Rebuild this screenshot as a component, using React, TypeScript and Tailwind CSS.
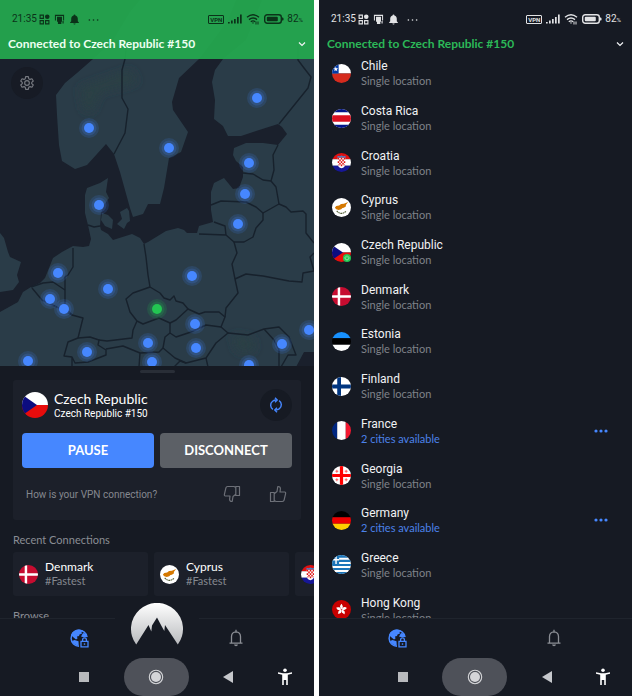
import { useId } from 'react';
import type { ReactNode } from 'react';
import clsx from 'clsx';

type Country = {
  name: string;
  flag: string;
  cities?: number;
  connected?: boolean;
};

const countries: Country[] = [
  { name: 'Chile', flag: 'cl' },
  { name: 'Costa Rica', flag: 'cr' },
  { name: 'Croatia', flag: 'hr' },
  { name: 'Cyprus', flag: 'cy' },
  { name: 'Czech Republic', flag: 'cz', connected: true },
  { name: 'Denmark', flag: 'dk' },
  { name: 'Estonia', flag: 'ee' },
  { name: 'Finland', flag: 'fi' },
  { name: 'France', flag: 'fr', cities: 2 },
  { name: 'Georgia', flag: 'ge' },
  { name: 'Germany', flag: 'de', cities: 2 },
  { name: 'Greece', flag: 'gr' },
  { name: 'Hong Kong', flag: 'hk' },
];

const recents = [
  { name: 'Denmark', flag: 'dk' },
  { name: 'Cyprus', flag: 'cy' },
  { name: 'Croatia', flag: 'hr' },
];

const flagArt: Record<string, ReactNode> = {
  cl: (
    <>
      <path fill="#fff" d="M0 0h20v10H0z" />
      <path fill="#d52b1e" d="M0 10h20v10H0z" />
      <path fill="#0039a6" d="M0 0h7v10H0z" />
      <path fill="#fff" d="m4 3 .7 1.6 1.8.1-1.4 1.1.5 1.7L4 6.6l-1.6.9.5-1.7-1.4-1.1 1.8-.1z" />
    </>
  ),
  cr: (
    <>
      <path fill="#fff" d="M0 0h20v20H0z" />
      <path fill="#001489" d="M0 0h20v3.5H0zM0 16.5h20V20H0z" />
      <path fill="#da1020" d="M0 6.5h20v7H0z" />
    </>
  ),
  hr: (
    <>
      <path fill="#e01010" d="M0 0h20v6.7H0z" />
      <path fill="#fff" d="M0 6.7h20v6.6H0z" />
      <path fill="#171796" d="M0 13.3h20V20H0z" />
      <path fill="#fff" d="M6 5h8v7q-.5 3-4 4-3.500-1-4-4z" />
      <path
        fill="#e01010"
        d="M6 5h1.6v1.8H6zM9.2 5h1.6v1.8H9.2zM12.4 5H14v1.8h-1.6zM7.6 6.8h1.6v1.8H7.6zM10.8 6.8h1.6v1.8h-1.6zM6 8.6h1.6v1.8H6zM9.2 8.6h1.6v1.8H9.2zM12.4 8.6H14v1.8h-1.6zM7.6 10.4h1.6v1.8H7.6zM10.8 10.4h1.6v1.8h-1.6zM6.3 12.2h1.3V14zM9.2 12.2h1.6V14H9.2zM12.4 12.2h1.3L12.4 14z"
      />
      <path fill="#4a7fc4" d="m5.500 4.800.5-2 2 .6 2-.9 2 .9 2-.6.5 2z" />
    </>
  ),
  cy: (
    <>
      <path fill="#fff" d="M0 0h20v20H0z" />
      <path
        fill="#d57800"
        d="M3 10.200 4.500 8.500l3-.5 2-1.600 3-.4L17 4.200l-2.500 3.200.3 1.300-2.300 1.500-1.500.2-1.300 1.400-2.700.8-2.500-.8z"
      />
      <path fill="none" stroke="#4e5b31" strokeWidth="1.1" strokeDasharray="1.8 .5" d="M5 13.500q2 2.500 5 2.700 3-.2 5-2.700" />
    </>
  ),
  cz: (
    <>
      <path fill="#fff" d="M0 0h20v10H0z" />
      <path fill="#e80c0c" d="M0 10h20v10H0z" />
      <path fill="#0c0c80" d="M0 2v16l11.500-8z" />
    </>
  ),
  dk: (
    <>
      <path fill="#c60c30" d="M0 0h20v20H0z" />
      <path fill="#fff" d="M6 0h2.600v20H6zM0 8.700h20v2.600H0z" />
    </>
  ),
  ee: (
    <>
      <path fill="#1791ff" d="M0 0h20v6.7H0z" />
      <path fill="#000" d="M0 6.700h20v6.600H0z" />
      <path fill="#fff" d="M0 13.300h20V20H0z" />
    </>
  ),
  fi: (
    <>
      <path fill="#fff" d="M0 0h20v20H0z" />
      <path fill="#003580" d="M5.500 0h4v20h-4zM0 8h20v4H0z" />
    </>
  ),
  fr: (
    <>
      <path fill="#00267f" d="M0 0h5.500v20H0z" />
      <path fill="#fff" d="M5.500 0h9v20h-9z" />
      <path fill="#f31830" d="M14.500 0H20v20h-5.500z" />
    </>
  ),
  ge: (
    <>
      <path fill="#fff" d="M0 0h20v20H0z" />
      <path fill="#ff0000" d="M8.300 0h3.400v20H8.300zM0 8.300h20v3.400H0z" />
      <path
        fill="#ff5a5a"
        d="M4.600 4h1v3h-1zM3.600 5h3v1h-3zM14.400 4h1v3h-1zM13.400 5h3v1h-3zM4.600 13h1v3h-1zM3.600 14h3v1h-3zM14.400 13h1v3h-1zM13.400 14h3v1h-3z"
      />
    </>
  ),
  de: (
    <>
      <path fill="#000" d="M0 0h20v6.7H0z" />
      <path fill="#ee0000" d="M0 6.700h20v6.600H0z" />
      <path fill="#ffce00" d="M0 13.300h20V20H0z" />
    </>
  ),
  gr: (
    <>
      <path fill="#fff" d="M0 0h20v20H0z" />
      <path fill="#1c75b9" d="M0 0h20v2.800H0zM0 5h20v2.300H0zM0 9.500h20v2.200H0zM0 13.700h20v2.200H0zM0 17.800h20V20H0z" />
      <path fill="#1c75b9" d="M0 0h7.500v9.500H0z" />
      <path fill="#fff" d="M0 4.300h7.500v1.500H0zM3.500 0H5v9.500H3.500z" />
    </>
  ),
  hk: (
    <>
      <path fill="#c80000" d="M0 0h20v20H0z" />
      {[0, 72, 144, 216, 288].map((angle) => (
        <path
          key={angle}
          fill="#fff"
          transform={`rotate(${angle} 10 10)`}
          d="M10 9.700C8 8 7.800 5.500 10.600 4c-.8 1.400 2.800 2.700-.6 5.700z"
        />
      ))}
    </>
  ),
};

function Flag({ code, className }: { code: string; className?: string }) {
  return (
    <svg viewBox="0 0 20 20" className={clsx('shrink-0 overflow-hidden rounded-full', className)} aria-hidden="true">
      {flagArt[code]}
    </svg>
  );
}

function StatusBar({ className }: { className?: string }) {
  return (
    <div className={clsx('flex h-[37px] items-center justify-between pt-px pr-[11px] pl-3 font-[Roboto,sans-serif]', className)}>
      <div className="flex items-center gap-[2px]">
        <span className="text-[10px] leading-4">21:35</span>
        <svg viewBox="0 0 12 12" className="size-[11px]" fill="none" stroke="currentColor" strokeWidth="1.2">
          <path d="M1.200 1.200h3.600v3.600H1.200zM1.200 7.200h3.600v3.600H1.200zM7.200 7.200h3.600v3.600H7.200z" />
          <circle cx="9" cy="3" r="2.500" fill="currentColor" stroke="none" />
        </svg>
        <svg viewBox="0 0 12 12" className="ml-[2px] size-[11px]" fill="currentColor">
          <path d="M1 .8h10V7H9.900V2.200H2.100V7H1z" />
          <path d="M3.300 3h5.400v5.500H8V11H4.300V8.500h-1z" />
          <path d="M9.300 7.500h1.200v2.800H9.300z" />
        </svg>
        <svg viewBox="0 0 12 12" className="ml-[2px] size-[11px]" fill="currentColor">
          <path d="M6 .6a1 1 0 0 1 1 1c1.800.5 2.600 1.900 2.600 3.500V8l1.200 1.200v.6H1.200v-.6L2.400 8V5.100C2.400 3.500 3.200 2.100 5 1.600a1 1 0 0 1 1-1zM4.800 10.300h2.400a1.200 1.200 0 0 1-2.400 0z" />
        </svg>
        <svg viewBox="0 0 12 12" className="ml-[6px] size-[11px]" fill="currentColor">
          <circle cx="1.500" cy="6.500" r=".9" />
          <circle cx="6" cy="6.500" r=".9" />
          <circle cx="10.500" cy="6.500" r=".9" />
        </svg>
      </div>
      <div className="flex items-center gap-1">
        <span className="rounded-[1px] border border-current px-px text-[6px] leading-[7px] font-bold">VPN</span>
        <svg viewBox="0 0 14 10" className="h-[10px] w-[14px]" fill="currentColor">
          <path d="M0 8h1.700v1.500H0zM3 6.500h1.700v3H3zM6 5h1.700v4.500H6zM9 3h1.700v6.500H9zM12 .5h1.700v9H12z" />
        </svg>
        <svg viewBox="0 0 14 12" className="h-3 w-[14px]" fill="none" stroke="currentColor" strokeWidth="1.4">
          <path d="M1 4.300q6-5 12 0M3 6.600q4-3.200 8 0M4.800 8.700q2.200-1.700 4.400 0" />
          <path fill="currentColor" stroke="none" d="M6 9.500h2L7 11zM9.500 8.500h1v3h-1zM11.500 8.500h1v3h-1z" />
        </svg>
        <svg viewBox="0 0 20 10" className="h-[10px] w-5" fill="currentColor">
          <rect x=".7" y=".7" width="16.600" height="8.600" rx="2.500" fill="none" stroke="currentColor" strokeWidth="1.4" />
          <rect x="2.800" y="2.700" width="11" height="4.600" rx="1" />
          <path d="M18 3.500h.8q.8 0 .8 1.500t-.8 1.500H18z" />
        </svg>
        <span className="-ml-px text-[10px] leading-4">
          82<span className="text-[6px]">%</span>
        </span>
      </div>
    </div>
  );
}

function ConnectionTitle({ className }: { className?: string }) {
  return (
    <button type="button" className={clsx('flex h-[14px] w-full items-center justify-between px-2', className)}>
      <span className="text-[12px] leading-[14px] font-bold">Connected to Czech Republic #150</span>
      <svg viewBox="0 0 8 8" className="size-2 text-gray-100" fill="none" stroke="currentColor" strokeWidth="1.2">
        <path d="m1 2.500 3 3 3-3" />
      </svg>
    </button>
  );
}

const land = [
  // Scandinavia
  'M140 0 130 12 112 42 93 59 77 73 65 83 56 95 57 115 59 145 62 161 75 169 87 165 106 144 114 154 120 172 130 208 133 217 143 214 148 204 160 204 164 188 169 158 181 152 188 132 173 110 172 102 179 78 199 59 212 42 228 20 236 0z',
  // Finland, the Baltics and the continent
  'M314 0H262L246 40 223 59 215 70 212 82 215 100 214 119 223 126 228 136 241 136 256 131 278 124 282 127 287 134 278 145 263 143 246 143 234 148 233 155 236 161 243 167 243 177 239 188 233 189 224 178 214 183 211 192 211 210 213 222 199 226 197 233 187 233 184 230 178 228 166 231 148 242 144 244 140 238 132 234 113 240 108 234 101 230 100 226 101 213 104 205 109 198 106 192 108 178 100 183 87 188 85 195 85 213 88 225 91 239 89 246 83 247 73 246 62 252 53 258 45 278 40 283 31 287 23 292 18 302 0 312V367H296L304 352H314z',
  // Great Britain
  'M0 233 4 238 8 252 10 257 21 262 17 275 19 282 13 290 0 292z',
  // Danish islands
  'M102 213 108 215 113 220 112 229 105 226 101 220z',
  'M120 212 127 208 129 211 130 221 127 223 124 229 117 224 122 219z',
];

const borders = [
  'M127 40 125 59 122 70V98L128 109 125 133 114 154',
  'M298 40V60L304 68 311 77 308 88 279 124',
  'M278 145 273 155 274 170 271 181 276 187 279 204 286 207 291 212 303 211 306 214V233L314 243',
  'M243 173 253 174 263 180 271 181',
  'M211 205 221 201 246 202 256 207 263 213 279 204',
  'M263 213V220L256 228 253 237 244 242 234 242 226 235 225 226 214 222M226 235 199 234',
  'M234 242 237 253 232 264 235 279 238 293 226 308 225 317',
  'M235 279 246 274 263 276 289 281 302 282 303 273 314 271 310 257 314 253',
  'M144 244 146 257 148 275 150 287 133 293 126 299 130 312 137 321 143 324 159 318 170 323 176 320 188 309 183 303 176 301 174 296 170 300 164 298 160 293 150 287',
  'M188 309 199 314 205 312 219 312 225 317 221 327 206 325 191 332 176 337 170 333V323',
  'M170 333 165 337 163 348 175 358 186 363 206 358 216 343 228 333 221 327',
  'M163 348 159 352 140 353 123 346 106 349M140 353 139 367M186 363 180 361 174 367M206 358 208 367',
  'M228 333 248 335 264 329 279 327 289 337 296 355 288 355 281 367M264 329 274 340 279 350V367',
  'M73 248 73 267 68 275 65 277V307L72 315 83 318 78 338',
  'M31 287 43 283 53 282 65 290M32 288 42 300 57 307 72 315',
  'M78 338 68 342 64 356 72 357 75 363 88 362 106 355V350L98 345 99 340 90 337 78 338M72 357V367',
  'M99 340 107 341 132 338 133 330 137 321',
  'M88 225 94 227 100 226',
];

const servers = [
  [89, 128], [257, 98], [169, 148], [249, 163], [245, 194], [99, 205], [238, 224],
  [58, 273], [50, 299], [64, 309], [108, 289], [192, 276], [195, 324], [196, 348],
  [148, 343], [152, 362], [87, 352], [28, 361], [249, 365], [282, 344], [309, 330],
];

function ServerMap() {
  const blur = useId();
  return (
    <svg
      viewBox="0 0 314 366"
      preserveAspectRatio="xMidYMid slice"
      className="absolute inset-0 size-full"
      role="img"
      aria-label="Server map"
    >
      <defs>
        <filter id={blur} x="-50%" y="-50%" width="200%" height="200%">
          <feGaussianBlur stdDeviation="5" />
        </filter>
      </defs>
      <rect width="314" height="366" fill="#1a202c" />
      {land.map((d) => (
        <path key={d} d={d} fill="#2a3c48" />
      ))}
      <g fill="#2b4045" filter={`url(#${blur})`}>
        <path d="M80 88 130 70 138 82 100 92 92 112 84 110z" />
        <path d="M232 335 252 338 255 350 238 352z" />
      </g>
      <g fill="none" stroke="#17212c" strokeWidth="1.4" strokeLinejoin="round">
        {borders.map((d) => (
          <path key={d} d={d} />
        ))}
      </g>
      {servers.map(([x, y]) => (
        <g key={`${x}-${y}`} fill="#4687ff">
          <circle cx={x} cy={y} r="10" opacity=".15" />
          <circle cx={x} cy={y} r="7.500" opacity=".18" />
          <circle cx={x} cy={y} r="5" />
        </g>
      ))}
      <g fill="#23c552">
        <circle cx="157" cy="309" r="10" opacity=".15" />
        <circle cx="157" cy="309" r="7.500" opacity=".18" />
        <circle cx="157" cy="309" r="5" />
      </g>
    </svg>
  );
}

function GearIcon() {
  return (
    <svg viewBox="0 0 24 24" className="size-4" fill="none" stroke="currentColor" strokeWidth="1.7" strokeLinejoin="round">
      <path d="M10 2.500h4l.6 3 1.900 1.100 2.900-1 2 3.400-2.300 2v2l2.300 2-2 3.400-2.900-1-1.900 1.100-.6 3h-4l-.6-3-1.900-1.100-2.900 1-2-3.400 2.300-2v-2l-2.300-2 2-3.400 2.900 1 1.900-1.100z" />
      <circle cx="12" cy="12" r="3.500" />
    </svg>
  );
}

function ThumbIcon({ down }: { down?: boolean }) {
  return (
    <svg
      viewBox="0 0 18 18"
      className={clsx('size-[18px] text-[#6d7078]', down && 'rotate-180')}
      fill="none"
      stroke="currentColor"
      strokeWidth="1.2"
      strokeLinejoin="round"
    >
      <path d="M1.500 7.500h3.700v9H1.500zM5.200 8.700 8 6.500 8.800 1.500q2.600-.2 2.600 2.300L11 7h4.600q1.300.2 1 1.600l-1.500 6.600q-.3 1.300-1.700 1.300H7l-1.800-1" />
    </svg>
  );
}

function GlobeLockIcon() {
  return (
    <svg viewBox="0 0 20 20" className="size-5" fill="none">
      <path stroke="#4687ff" strokeWidth="1.5" d="M18 9A8 8 0 1 0 10 18.200" />
      <path
        fill="#4687ff"
        d="M2 7Q4 1.500 10 1.500L14 2.200 12.500 4 13 5.500 10.500 6.500 10 8 8 8.500 8.500 10.500 7 11.500 4 9zM14 5l3.500 1 .8 3.200H14.500L12 8.500zM5.500 12l4 1.200L9.800 18q-5-1-6.800-5z"
      />
      <path fill="#161a23" d="M10.500 9.500H20V20h-9.500z" />
      <path stroke="#4687ff" strokeWidth="1.3" d="M12 13.300h7v5.500h-7zM13.600 13v-1.200a1.900 1.900 0 0 1 3.800 0V13" />
      <path fill="#4687ff" d="M14.800 15.300h1.400v1.500h-1.400z" />
    </svg>
  );
}

function BellIcon() {
  return (
    <svg viewBox="0 0 16 18" className="h-[18px] w-4 text-[#8b8e95]" fill="none" stroke="currentColor" strokeWidth="1.3">
      <path d="M3.500 14V7.500Q3.700 3 8 2.800q4.300.2 4.500 4.700V14M1.500 14.200h13M8 .8v2" />
      <path fill="currentColor" stroke="none" d="M6 15.500h4q-.3 1.800-2 1.800t-2-1.800z" />
    </svg>
  );
}

function NordLogo() {
  const shade = useId();
  return (
    <svg viewBox="0 -1 52 42" className="h-[42px] w-[52px]" aria-hidden="true">
      <defs>
        <linearGradient id={shade} x1="0" y1="0" x2="0" y2="1">
          <stop offset="0" stopColor="#ffffff" />
          <stop offset="1" stopColor="#b9bbbe" />
        </linearGradient>
      </defs>
      <path
        fill={`url(#${shade})`}
        d="M5.200 40.500A26 26 0 1 1 46.800 40.500L34 21 33.300 27 30.500 22 26 13.500 21 21.500 20.300 27.500 17.500 21z"
      />
    </svg>
  );
}

function AppTabs({ logo }: { logo?: boolean }) {
  return (
    <nav className="relative z-10 grid h-[39px] shrink-0 grid-cols-2 border-t border-[#1f242d] bg-[#161a23]">
      <button type="button" aria-label="Servers" className="flex items-center justify-center">
        <GlobeLockIcon />
      </button>
      <button type="button" aria-label="Notifications" className="flex items-center justify-center">
        <BellIcon />
      </button>
      {logo && (
        <button
          type="button"
          aria-label="Connect"
          className="absolute bottom-3 left-1/2 -translate-x-1/2 bg-[#161a23] px-4"
        >
          <NordLogo />
        </button>
      )}
    </nav>
  );
}

function SystemBar() {
  return (
    <nav className="flex h-[39px] shrink-0 items-end bg-[#161a23] pr-3 pl-11">
      <button type="button" aria-label="Recent apps" className="flex h-[38px] flex-1 items-center justify-center">
        <span className="size-[10px] bg-[#b8babd]" />
      </button>
      <button
        type="button"
        aria-label="Home"
        className="flex h-[38px] w-[65px] items-center justify-center rounded-full bg-[#4e5159]"
      >
        <svg viewBox="0 0 16 16" className="size-4">
          <circle cx="8" cy="8" r="6.700" fill="none" stroke="#d4d5d8" strokeWidth="1.1" />
          <circle cx="8" cy="8" r="5" fill="#d4d5d8" />
        </svg>
      </button>
      <button type="button" aria-label="Back" className="flex h-[38px] flex-1 items-center justify-center">
        <svg viewBox="0 0 10 12" className="h-3 w-[10px]">
          <path fill="#c6c8cc" d="M10 0v12L0 6z" />
        </svg>
      </button>
      <button type="button" aria-label="Accessibility" className="flex h-[38px] w-[34px] items-center justify-center">
        <svg viewBox="0 0 16 18" className="h-[18px] w-4" fill="#fff">
          <circle cx="8" cy="2.200" r="1.800" />
          <path d="M1 4.300 6 5.200h4l5-.9v1.500l-4.200.9V17H9.200v-5H6.800v5H5.200V6.700L1 5.800z" />
        </svg>
      </button>
    </nav>
  );
}

function HomeScreen() {
  return (
    <section className="flex min-w-0 flex-col overflow-hidden bg-[#161a23]">
      <div className="relative h-[366px] shrink-0 overflow-hidden">
        <ServerMap />
        <header className="relative bg-[#24aa4f]/92 pb-2">
          <StatusBar className="text-[#0b3219]" />
          <ConnectionTitle className="text-[#edfff2]" />
        </header>
        <button
          type="button"
          aria-label="Settings"
          className="relative mt-2 ml-[11px] flex size-8 items-center justify-center rounded-full bg-[#171b25] text-[#777a81]"
        >
          <GearIcon />
        </button>
      </div>

      <div className="relative flex min-h-0 flex-1 flex-col overflow-hidden px-[13px]">
        <span className="mx-auto mt-1 h-[3px] w-[35px] shrink-0 rounded-full bg-[#292e37]" />
        <div className="mt-[7px] h-[140px] shrink-0 rounded-[3px] bg-[#1c202a] px-[9px] pt-[9px]">
          <div className="flex h-8 items-center">
            <Flag code="cz" className="size-[26px]" />
            <div className="ml-[6px] flex-1 pt-[2px] text-white">
              <h1 className="text-[14px] leading-4">Czech Republic</h1>
              <p className="font-[Roboto,sans-serif] text-[10px] leading-[14px]">Czech Republic #150</p>
            </div>
            <button
              type="button"
              aria-label="Reconnect"
              className="flex size-8 items-center justify-center rounded-full bg-[#161a23]"
            >
              <svg viewBox="0 0 16 16" className="size-4" fill="none" stroke="#4687ff" strokeWidth="1.4">
                <path d="M4.900 12.400A5 5 0 0 1 4.600 4.300Q6 3 8.500 3M11.100 3.600a5 5 0 0 1 .3 8.100Q10 13 7.500 13" />
                <path d="M7 .8 9.200 3 7 5.200M9 10.800 6.800 13 9 15.200" />
              </svg>
            </button>
          </div>
          <div className="mt-3 grid grid-cols-2 gap-[6px] text-[13px] font-bold text-white">
            <button type="button" className="h-[35px] rounded-[4px] bg-[#4687ff]">
              PAUSE
            </button>
            <button type="button" className="h-[35px] rounded-[4px] bg-[#5c6066]">
              DISCONNECT
            </button>
          </div>
          <div className="mt-[17px] flex h-[18px] items-center pr-[5px] pl-1 text-[#85888f]">
            <p className="flex-1 font-[Roboto,sans-serif] text-[10px]">How is your VPN connection?</p>
            <button type="button" aria-label="Bad connection">
              <ThumbIcon down />
            </button>
            <button type="button" aria-label="Good connection" className="ml-7">
              <ThumbIcon />
            </button>
          </div>
        </div>

        <h2 className="mt-3 text-[11px] leading-4 text-[#8a8d94]">Recent Connections</h2>
        <div className="mt-1 flex gap-[6px]">
          {recents.map((recent) => (
            <button
              key={recent.name}
              type="button"
              className="flex h-11 w-[135px] shrink-0 items-center gap-[7px] rounded-[3px] bg-[#1c202a] pl-[6px] text-left"
            >
              <Flag code={recent.flag} className="size-[19px]" />
              <span>
                <span className="block text-[12px] leading-[14px] text-white">{recent.name}</span>
                <span className="block text-[11px] leading-[14px] text-[#85888f]">#Fastest</span>
              </span>
            </button>
          ))}
        </div>
        <h2 className="mt-3 text-[11px] leading-4 text-[#8a8d94]">Browse</h2>
      </div>

      <AppTabs logo />
      <SystemBar />
    </section>
  );
}

function CountryRow({ country }: { country: Country }) {
  return (
    <li className="flex items-center pr-6 pl-[13px]">
      <span className="relative shrink-0">
        <Flag code={country.flag} className="size-[19px]" />
        {country.connected && (
          <svg viewBox="0 0 8 8" className="absolute right-0 bottom-0 size-2">
            <circle cx="4" cy="4" r="4" fill="#23c552" />
            <path fill="none" stroke="#a8efbb" strokeWidth=".8" d="M4 1.500v2M2.600 2.500a2 2 0 1 0 2.800 0" />
          </svg>
        )}
      </span>
      <div className="ml-[10px] flex-1">
        <p className="font-[Roboto,sans-serif] text-[12px] leading-4 text-[#f1f2f4]">{country.name}</p>
        <p className={clsx('text-[11px] leading-[14px]', country.cities ? 'text-[#4c82ea]' : 'text-[#7f8289]')}>
          {country.cities ? `${country.cities} cities available` : 'Single location'}
        </p>
      </div>
      {country.cities && (
        <button type="button" aria-label={`${country.name} cities`}>
          <svg viewBox="0 0 14 4" className="h-1 w-[14px]" fill="#4687ff">
            <circle cx="2" cy="2" r="1.600" />
            <circle cx="7" cy="2" r="1.600" />
            <circle cx="12" cy="2" r="1.600" />
          </svg>
        </button>
      )}
    </li>
  );
}

function CountriesScreen() {
  return (
    <section className="flex min-w-0 flex-col overflow-hidden bg-[#161a23]">
      <header className="shrink-0">
        <StatusBar className="text-[#e2e3e5]" />
        <ConnectionTitle className="text-[#2cb858]" />
      </header>
      <div className="min-h-0 flex-1 overflow-hidden">
        <ul className="grid h-[581px] auto-rows-fr">
          {countries.map((country) => (
            <CountryRow key={country.name} country={country} />
          ))}
        </ul>
      </div>
      <AppTabs />
      <SystemBar />
    </section>
  );
}

export default function App() {
  return (
    <main className="grid h-screen grid-cols-[314fr_313fr] grid-rows-1 gap-[5px] bg-white font-[Lato,sans-serif]">
      <HomeScreen />
      <CountriesScreen />
    </main>
  );
}
